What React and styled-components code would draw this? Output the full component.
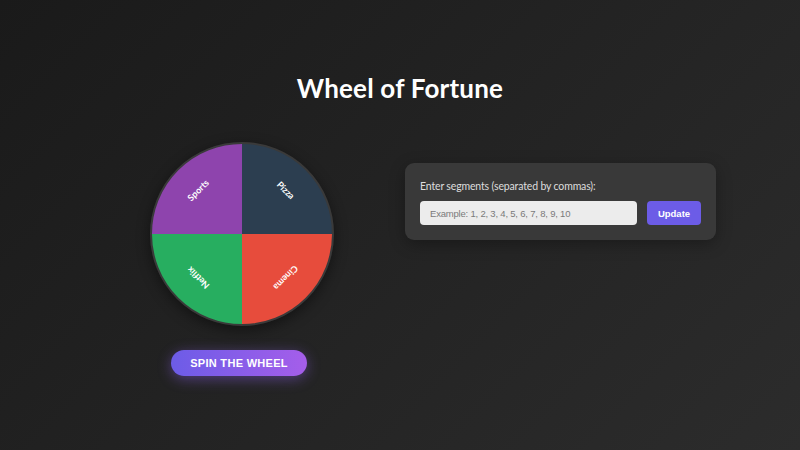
import React from "react";
import styled, { createGlobalStyle } from "styled-components";

const GlobalStyle = createGlobalStyle`
	html, body {
		margin: 0;
		padding: 0;
	}
	body {
		width: 800px;
		height: 450px;
		overflow: hidden;
		background: linear-gradient(135deg, #1a1a1a 0%, #2c2c2c 100%);
		font-family: "Lato", "Open Sans", sans-serif;
		color: #fff;
	}
`;

const Page = styled.div`
	display: flex;
	flex-direction: column;
	height: 450px;
	padding-top: 72px;
	box-sizing: border-box;
`;

const Title = styled.h1`
	margin: 0;
	text-align: center;
	font-family: "Lato", "Open Sans", sans-serif;
	font-weight: 700;
	font-size: 26px;
	line-height: 32px;
	color: #fff;
	letter-spacing: 0.2px;
`;

const Row = styled.div`
	display: flex;
	align-items: flex-start;
	margin-top: 38px;
	padding-left: 150px;
	gap: 71px;
`;

const WheelColumn = styled.div`
	display: flex;
	flex-direction: column;
	align-items: center;
	width: 184px;
`;

const WheelFrame = styled.div`
	width: 184px;
	height: 184px;
	border-radius: 50%;
	box-shadow: 0 4px 14px rgba(0, 0, 0, 0.45);
`;

const SpinButton = styled.button`
	margin: 24px 6px 0 0;
	width: 136px;
	height: 26px;
	border: 0;
	border-radius: 13px;
	background: linear-gradient(90deg, #6c5ce7 0%, #a55eea 100%);
	box-shadow: 0 3px 14px rgba(140, 95, 235, 0.45);
	color: #fff;
	font-family: "Liberation Sans", Arial, sans-serif;
	font-weight: 700;
	font-size: 11px;
	letter-spacing: 0.3px;
	cursor: pointer;
`;

const Panel = styled.div`
	margin-top: 21px;
	width: 311px;
	box-sizing: border-box;
	padding: 16px 15px 15px;
	background: #393939;
	border-radius: 9px;
	box-shadow: 0 4px 16px rgba(0, 0, 0, 0.3);
`;

const Label = styled.label`
	display: block;
	font-family: "Lato", "Open Sans", sans-serif;
	font-size: 10.5px;
	letter-spacing: -0.15px;
	line-height: 14px;
	color: #ddd;
`;

const InputRow = styled.div`
	display: flex;
	gap: 10px;
	margin-top: 8px;
`;

const SegmentInput = styled.input`
	flex: 1;
	height: 24px;
	box-sizing: border-box;
	border: 0;
	border-radius: 4px;
	padding: 0 10px;
	background: #ececec;
	font-family: "Liberation Sans", Arial, sans-serif;
	font-size: 9.5px;
	letter-spacing: -0.2px;
	color: #333;
	outline: none;
	&::placeholder {
		color: #7a7a7a;
	}
`;

const UpdateButton = styled.button`
	width: 54px;
	height: 24px;
	border: 0;
	border-radius: 4px;
	background: #6c5ce7;
	color: #fff;
	font-family: "Liberation Sans", Arial, sans-serif;
	font-weight: 700;
	font-size: 9.5px;
	cursor: pointer;
`;

const segments = [
	{ label: "Cinema", color: "#e74c3c" },
	{ label: "Netflix", color: "#27ae60" },
	{ label: "Sports", color: "#8e44ad" },
	{ label: "Pizza", color: "#2c3e50" },
];

function Wheel({ items }) {
	const r = 91;
	const c = 92;
	const step = 360 / items.length;
	const rad = (d) => (d * Math.PI) / 180;
	return (
		<svg width="184" height="184" viewBox="0 0 184 184">
			{items.map((s, i) => {
				const a0 = rad(i * step);
				const a1 = rad((i + 1) * step);
				const x0 = c + r * Math.cos(a0);
				const y0 = c + r * Math.sin(a0);
				const x1 = c + r * Math.cos(a1);
				const y1 = c + r * Math.sin(a1);
				const mid = i * step + step / 2;
				const tx = c + 61 * Math.cos(rad(mid));
				const ty = c + 61 * Math.sin(rad(mid));
				return (
					<g key={s.label}>
						<path
							d={`M${c} ${c} L${x0} ${y0} A${r} ${r} 0 0 1 ${x1} ${y1} Z`}
							fill={s.color}
						/>
						<text
							x={tx}
							y={ty}
							fill="#fff"
							fontFamily="Lato, Open Sans, sans-serif"
							fontWeight="700"
							fontSize="9"
							textAnchor="middle"
							dominantBaseline="middle"
							transform={`rotate(${mid + 90} ${tx} ${ty})`}
						>
							{s.label}
						</text>
					</g>
				);
			})}
			<circle cx={c} cy={c} r={r} fill="none" stroke="#3a3a3a" strokeWidth="2" />
		</svg>
	);
}

export default function App() {
	return (
		<Page>
			<GlobalStyle />
			<Title>Wheel of Fortune</Title>
			<Row>
				<WheelColumn>
					<WheelFrame>
						<Wheel items={segments} />
					</WheelFrame>
					<SpinButton>SPIN THE WHEEL</SpinButton>
				</WheelColumn>
				<Panel>
					<Label>Enter segments (separated by commas):</Label>
					<InputRow>
						<SegmentInput placeholder="Example: 1, 2, 3, 4, 5, 6, 7, 8, 9, 10" />
						<UpdateButton>Update</UpdateButton>
					</InputRow>
				</Panel>
			</Row>
		</Page>
	);
}
